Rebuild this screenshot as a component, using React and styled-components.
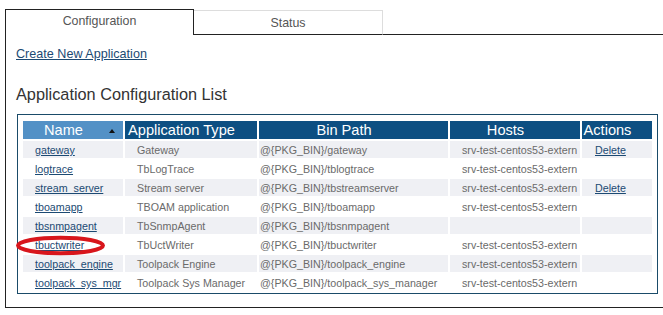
import React from "react";
import styled, { createGlobalStyle } from "styled-components";

const GlobalStyle = createGlobalStyle`
  html, body { margin: 0; padding: 0; background: #fff; }
  body { font-family: "Liberation Sans", Arial, Helvetica, sans-serif; }
`;

const Page = styled.div`
  position: relative;
  padding: 9px 0 0 5px;
`;

const TabBar = styled.div`
  display: flex;
  align-items: flex-end;
  height: 26px;
`;

const ActiveTab = styled.div`
  box-sizing: border-box;
  width: 189px;
  height: 26px;
  border: 1px solid #222;
  border-bottom: none;
  background: #fff;
  color: #555;
  font-size: 12.4px;
  text-align: center;
  line-height: 22px;
`;

const Tab = styled.div`
  box-sizing: border-box;
  width: 189px;
  height: 25px;
  border-top: 1px solid #ddd;
  border-right: 1px solid #ddd;
  border-bottom: 1px solid #222;
  color: #555;
  font-size: 12.4px;
  text-align: center;
  line-height: 24px;
`;

const TabFill = styled.div`
  flex: 1;
  height: 25px;
  box-sizing: border-box;
  border-bottom: 1px solid #222;
`;

const Panel = styled.div`
  border-left: 1px solid #222;
  border-bottom: 1px solid #222;
  padding: 12px 0 13px 10px;
`;

const CreateLink = styled.a`
  display: block;
  width: max-content;
  font-size: 12.6px;
  line-height: 15px;
  color: #1c4a73;
  text-decoration: underline;
`;

const Heading = styled.h2`
  margin: 22px 0 0;
  font-size: 16.3px;
  line-height: 20px;
  font-weight: normal;
  color: #333;
`;

const TableBox = styled.div`
  position: relative;
  width: max-content;
  margin: 10px 0 0 1px;
  padding: 4px 3px 0 3px;
  border: 1px solid #1a4b69;
`;

const Table = styled.table`
  border-collapse: separate;
  border-spacing: 2px;
  table-layout: fixed;
  width: 633px;
`;

const Th = styled.th`
  position: relative;
  height: 18px;
  padding: 0 19px 0 0;
  font-size: 14.6px;
  font-weight: normal;
  line-height: 18px;
  color: #fff;
  text-align: center;
  white-space: nowrap;
  background: ${(p) => (p.$sorted ? "#5391c6" : "#0d4f82")};
`;

const SortArrow = styled.span`
  position: absolute;
  right: 8px;
  top: 8px;
  width: 0;
  height: 0;
  border-left: 3.5px solid transparent;
  border-right: 3.5px solid transparent;
  border-bottom: 4px solid #111;
`;

const Td = styled.td`
  height: 16px;
  padding: 1px 0 0 ${(p) => p.$pad}px;
  font-size: 10.7px;
  line-height: 16px;
  color: #6a6a6a;
  white-space: nowrap;
  overflow: hidden;
  background: ${(p) => (p.$shade ? "#eff0f4" : "#fff")};
`;

const CellLink = styled.a`
  color: #1c4a73;
  text-decoration: underline;
`;

const Marker = styled.svg`
  position: absolute;
  left: -2px;
  top: 121px;
  overflow: visible;
`;

const columns = [
  { title: "Name", width: 100, sorted: true },
  { title: "Application Type", width: 132 },
  { title: "Bin Path", width: 189 },
  { title: "Hosts", width: 130 },
  { title: "Actions", width: 70 },
];

const HOST = "srv-test-centos53-extern";

const rows = [
  ["gateway", "Gateway", "gateway", HOST, true],
  ["logtrace", "TbLogTrace", "tblogtrace", HOST, false],
  ["stream_server", "Stream server", "tbstreamserver", HOST, true],
  ["tboamapp", "TBOAM application", "tboamapp", HOST, false],
  ["tbsnmpagent", "TbSnmpAgent", "tbsnmpagent", "", false],
  ["tbuctwriter", "TbUctWriter", "tbuctwriter", HOST, false],
  ["toolpack_engine", "Toolpack Engine", "toolpack_engine", HOST, false],
  ["toolpack_sys_mgr", "Toolpack Sys Manager", "toolpack_sys_manager", HOST, false],
];

export default function App() {
  return (
    <Page>
      <GlobalStyle />
      <TabBar>
        <ActiveTab>Configuration</ActiveTab>
        <Tab>Status</Tab>
        <TabFill />
      </TabBar>
      <Panel>
        <CreateLink href="#">Create New Application</CreateLink>
        <Heading>Application Configuration List</Heading>
        <TableBox>
          <Table>
            <colgroup>
              {columns.map((c) => (
                <col key={c.title} style={{ width: c.width }} />
              ))}
            </colgroup>
            <thead>
              <tr>
                {columns.map((c) => (
                  <Th key={c.title} $sorted={c.sorted}>
                    {c.title}
                    {c.sorted && <SortArrow />}
                  </Th>
                ))}
              </tr>
            </thead>
            <tbody>
              {rows.map(([name, type, bin, host, del], i) => {
                const shade = i % 2 === 0;
                return (
                  <tr key={name}>
                    <Td $pad={12} $shade={shade}>
                      <CellLink href="#">{name}</CellLink>
                    </Td>
                    <Td $pad={12} $shade={shade}>{type}</Td>
                    <Td $pad={1} $shade={shade}>@{"{PKG_BIN}"}/{bin}</Td>
                    <Td $pad={12} $shade={shade}>{host}</Td>
                    <Td $pad={13} $shade={shade}>
                      {del && <CellLink href="#">Delete</CellLink>}
                    </Td>
                  </tr>
                );
              })}
            </tbody>
          </Table>
          <Marker width="89" height="19" viewBox="0 0 89 19">
            <ellipse cx="44.5" cy="9.5" rx="42.5" ry="7.7" fill="none" stroke="#d8161c" strokeWidth="4" />
          </Marker>
        </TableBox>
      </Panel>
    </Page>
  );
}
